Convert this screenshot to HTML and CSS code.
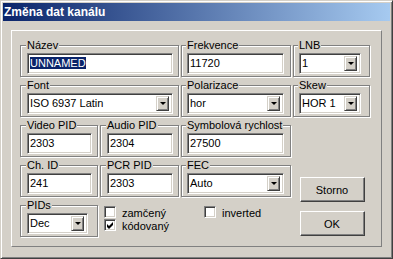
FILE: index.html
```html
<!DOCTYPE html>
<html>
<head>
    <title>Změna dat kanálu</title>
    <link rel="stylesheet" href="styles.css">
</head>

<body>
    <div class="window">
        <div class="titlebar">Změna dat kanálu</div>
        <div class="client">
            <div class="frame">
                <div class="group wide"><span class="legend">Název</span><div class="field"><span class="value"><span class="selected">UNNAMED</span></span></div></div>
                <div class="group mid"><span class="legend">Frekvence</span><div class="field"><span class="value">11720</span></div></div>
                <div class="group side"><span class="legend">LNB</span><div class="field"><span class="value">1</span><span class="drop"></span></div></div>

                <div class="group wide"><span class="legend">Font</span><div class="field"><span class="value">ISO 6937 Latin</span><span class="drop"></span></div></div>
                <div class="group mid"><span class="legend">Polarizace</span><div class="field"><span class="value">hor</span><span class="drop"></span></div></div>
                <div class="group side"><span class="legend">Skew</span><div class="field"><span class="value">HOR 1</span><span class="drop"></span></div></div>

                <div class="group"><span class="legend">Video PID</span><div class="field"><span class="value">2303</span></div></div>
                <div class="group"><span class="legend">Audio PID</span><div class="field"><span class="value">2304</span></div></div>
                <div class="group mid"><span class="legend">Symbolová rychlost</span><div class="field"><span class="value">27500</span></div></div>

                <div class="group row-start"><span class="legend">Ch. ID</span><div class="field"><span class="value">241</span></div></div>
                <div class="group"><span class="legend">PCR PID</span><div class="field"><span class="value">2303</span></div></div>
                <div class="group mid"><span class="legend">FEC</span><div class="field"><span class="value">Auto</span><span class="drop"></span></div></div>

                <div class="group pids"><span class="legend">PIDs</span><div class="field"><span class="value">Dec</span><span class="drop"></span></div></div>
                <div class="checks">
                    <div class="check"><span class="box"></span>zamčený</div>
                    <div class="check"><span class="box"><svg width="7" height="7" viewBox="0 0 7 7"><path d="M0 2 L2 4 L6 0 L6 3 L2 7 L0 5 Z" fill="#000"/></svg></span>kódovaný</div>
                </div>
                <div class="checks inverted">
                    <div class="check"><span class="box"></span>inverted</div>
                </div>

                <div class="buttons">
                    <button class="button">Storno</button>
                    <button class="button">OK</button>
                </div>
            </div>
        </div>
    </div>
</body>
</html>
```

FILE: styles.css
```css
body {
    margin: 0;
    font-family: "Liberation Sans", Arial, sans-serif;
    font-size: 11px;
    color: #000;
    background: #d4d0c8;
}

.window {
    box-sizing: border-box;
    width: 393px;
    height: 259px;
    padding: 2px;
    border: 1px solid;
    border-color: #d4d0c8 #404040 #404040 #d4d0c8;
    box-shadow: inset 1px 1px #fff, inset -1px -1px #808080;
    background: #d4d0c8;
    display: flex;
    flex-direction: column;
}

.titlebar {
    height: 18px;
    line-height: 18px;
    padding-left: 1px;
    background: linear-gradient(to right, #0a246a, #a6caf0);
    color: #fff;
    font-weight: bold;
    font-size: 12px;
}

.client {
    flex: 1;
    display: flex;
    padding: 9px 8px;
}

.frame {
    flex: 1;
    border: 1px solid;
    border-color: #fff #808080 #808080 #fff;
    padding: 8px 0 0 8px;
    display: grid;
    grid-template-columns: 79px 80px 111px 78px;
    grid-template-rows: repeat(5, 39px);
    gap: 1px;
    align-content: start;
}

/* group box with etched border */
.group {
    margin: 6px 1px 1px 0;
    border: 1px solid #808080;
    box-shadow: inset 1px 1px #fff, 1px 1px #fff;
    padding: 0 5px 0 6px;
    display: flex;
    flex-direction: column;
}

.group.wide {
    grid-column: span 2;
}

.group.mid {
    padding: 0 6px 0 5px;
}

.group.side {
    padding: 0 8px 0 5px;
}

.group.row-start {
    grid-column-start: 1;
}

.group.pids {
    padding-right: 9px;
}

.legend {
    align-self: flex-start;
    margin: -7px 0 0 -1px;
    padding: 0 1px;
    line-height: 13px;
    background: #d4d0c8;
}

.field {
    margin-top: 1px;
    height: 21px;
    box-sizing: border-box;
    border: 1px solid;
    border-color: #808080 #fff #fff #808080;
    padding: 1px;
    box-shadow: inset 1px 1px #404040, inset -1px -1px #d4d0c8;
    background: #fff;
    display: flex;
    align-items: center;
}

.value {
    flex: 1;
    padding-left: 1px;
    line-height: 13px;
    white-space: nowrap;
}

.selected {
    background: #0a246a;
    color: #fff;
}

/* combo drop-down button */
.drop {
    align-self: stretch;
    width: 13px;
    margin: 1px 2px 1px 0;
    box-sizing: border-box;
    border: 1px solid;
    border-color: #d4d0c8 #404040 #404040 #d4d0c8;
    box-shadow: inset 1px 1px #fff, inset -1px -1px #808080;
    background: #d4d0c8;
    display: flex;
    align-items: center;
    justify-content: center;
}

.drop::after {
    content: "";
    border-left: 3px solid transparent;
    border-right: 3px solid transparent;
    border-top: 3px solid #000;
}

.checks {
    display: flex;
    flex-direction: column;
    padding: 7px 0 0 4px;
}

.checks.inverted {
    padding-left: 23px;
}

.check {
    display: flex;
    align-items: center;
    gap: 6px;
    height: 13px;
    line-height: 12px;
}

.box {
    width: 12px;
    height: 12px;
    box-sizing: border-box;
    border: 1px solid;
    border-color: #808080 #fff #fff #808080;
    box-shadow: inset 1px 1px #404040, inset -1px -1px #d4d0c8;
    background: #fff;
    display: flex;
    align-items: center;
    justify-content: center;
    align-self: flex-start;
}

.buttons {
    grid-column: 4;
    grid-row: 4 / span 2;
    display: flex;
    flex-direction: column;
    align-items: center;
    gap: 9px;
    padding-top: 18px;
}

.button {
    width: 65px;
    height: 25px;
    box-sizing: border-box;
    margin: 0;
    padding: 0;
    border: 1px solid;
    border-color: #fff #404040 #404040 #fff;
    box-shadow: inset -1px -1px #808080;
    background: #d4d0c8;
    font-family: inherit;
    font-size: 11px;
    color: #000;
}
```
